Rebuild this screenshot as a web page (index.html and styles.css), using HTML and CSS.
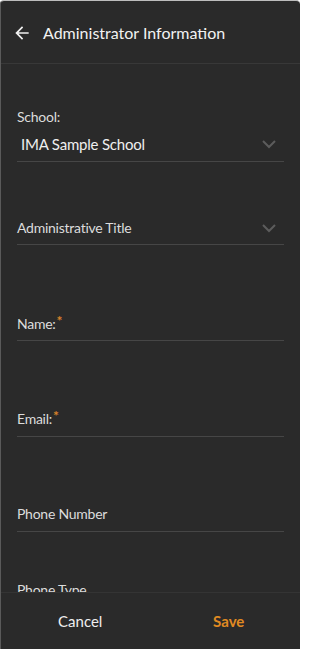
FILE: index.html
```html
<!DOCTYPE html>
<html lang="en">
<head>
<meta charset="utf-8">
<title>Administrator Information</title>
<link rel="stylesheet" href="styles.css">
</head>
<body>
<div class="app">
  <header class="header">
    <svg class="back" viewBox="0 0 24 24" width="20" height="20"><path d="M20 11H7.83l5.59-5.59L12 4l-8 8 8 8 1.41-1.41L7.83 13H20v-2z" fill="#f0f0f0"/></svg>
    <h1 class="title">Administrator Information</h1>
  </header>
  <main class="content">
    <div class="field field-school">
      <div class="label">School:</div>
      <div class="row">
        <span class="value">IMA Sample School</span>
        <svg class="chev" viewBox="0 0 14 9" width="14" height="9"><polyline points="1,1 7,7 13,1" fill="none" stroke="#5c5c5c" stroke-width="2"/></svg>
      </div>
    </div>
    <div class="field field-title">
      <div class="row">
        <span class="label">Administrative Title</span>
        <svg class="chev" viewBox="0 0 14 9" width="14" height="9"><polyline points="1,1 7,7 13,1" fill="none" stroke="#5c5c5c" stroke-width="2"/></svg>
      </div>
    </div>
    <div class="field field-name">
      <div class="row"><span class="label">Name:<span class="req">*</span></span></div>
    </div>
    <div class="field field-email">
      <div class="row"><span class="label">Email:<span class="req">*</span></span></div>
    </div>
    <div class="field field-phone">
      <div class="row"><span class="label">Phone Number</span></div>
    </div>
    <div class="field field-type">
      <div class="row"><span class="label">Phone Type</span></div>
    </div>
  </main>
  <footer class="footer">
    <button class="btn cancel">Cancel</button>
    <button class="btn save">Save</button>
  </footer>
</div>
</body>
</html>
```
FILE: styles.css
```css
html, body {
  margin: 0;
  padding: 0;
  background: #ffffff;
}
.app {
  box-sizing: border-box;
  width: 300px;
  height: 649px;
  background: #2a2a2a;
  border-top: 1px solid #bdbdbd;
  border-left: 1px solid #5a5a5a;
  border-radius: 4px 4px 0 0;
  display: flex;
  flex-direction: column;
  overflow: hidden;
  font-family: Lato, "Open Sans", sans-serif;
}
.header {
  flex: 0 0 auto;
  height: 62px;
  border-bottom: 1px solid #383838;
  display: flex;
  align-items: center;
  padding-left: 11px;
  gap: 11px;
}
.back {
  display: block;
  margin-top: 2px;
}
.title {
  margin: 0;
  font-size: 16px;
  font-weight: 400;
  color: #f2f2f2;
  letter-spacing: 0;
}
.content {
  flex: 1 1 auto;
  overflow: hidden;
  padding: 0 16px 0 16px;
}
.field {
  border-bottom: 1px solid #464646;
}
.row {
  display: flex;
  align-items: center;
  justify-content: space-between;
  height: 22px;
  padding-right: 8px;
}
.label {
  font-size: 14px;
  line-height: 20px;
  color: #dcdcdc;
  letter-spacing: -0.25px;
}
.value {
  font-size: 15px;
  color: #efefef;
  padding-left: 4px;
  letter-spacing: -0.2px;
}
.req {
  color: #d9822b;
  font-size: 14px;
  font-weight: 700;
  vertical-align: 3px;
  line-height: 0;
  margin-left: 1px;
}
.chev {
  display: block;
}
.field-school {
  padding-top: 43px;
  padding-bottom: 6px;
}
.field-school .row {
  margin-top: 6px;
}
.field-title {
  padding-top: 55px;
  padding-bottom: 5px;
}
.field-name {
  padding-top: 68px;
  padding-bottom: 5px;
}
.field-email {
  padding-top: 67px;
  padding-bottom: 6px;
}
.field-phone {
  padding-top: 66px;
  padding-bottom: 6px;
}
.field-type {
  padding-top: 47px;
  padding-bottom: 6px;
}
.footer {
  flex: 0 0 56px;
  border-top: 1px solid #343434;
  display: flex;
  background: #2a2a2a;
}
.btn {
  flex: 1 1 0;
  background: none;
  border: none;
  font-family: Lato, "Open Sans", sans-serif;
  font-size: 15px;
  padding: 0;
  cursor: pointer;
}
.cancel {
  color: #efefef;
  padding-left: 8px;
}
.save {
  color: #e08a22;
  font-weight: 700;
  padding-left: 6px;
}
```
